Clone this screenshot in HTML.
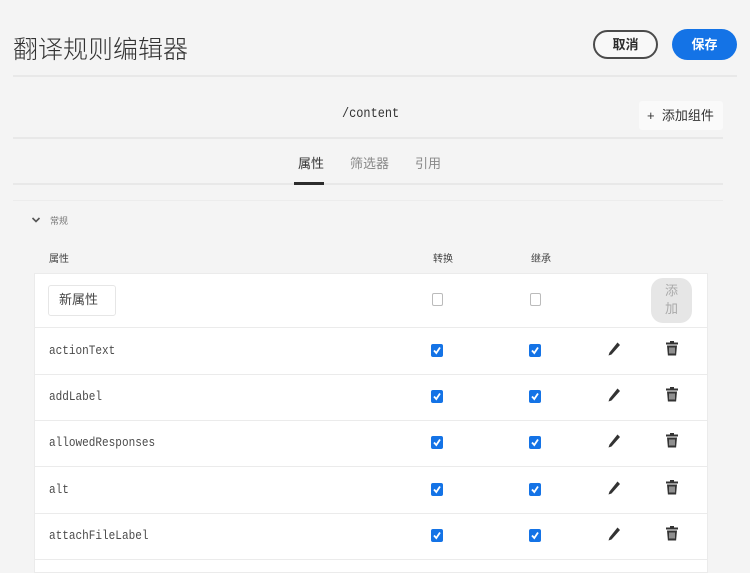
<!DOCTYPE html>
<html><head><meta charset="utf-8"><style>
*{margin:0;padding:0;box-sizing:border-box}
body{width:750px;height:571px;background:#f4f4f4;position:relative;overflow:hidden;font-family:"Liberation Sans","Noto Sans CJK SC",sans-serif;color:#2c2c2c}
.a{position:absolute}
.hr{position:absolute;height:2px;background:#e8e8e8}
.mono{font-family:"Liberation Mono","DejaVu Sans Mono",monospace;font-size:13px;color:#4b4b4b;transform:scaleX(0.85);transform-origin:left top;white-space:nowrap}
.cb{position:absolute;width:12px;height:13px;border-radius:2px;background:#1473e6}
.cb svg{position:absolute;left:1px;top:1px}
.ecb{position:absolute;width:11px;height:13px;border:1.5px solid #bbb;border-radius:2px;background:#fff}
.rowline{position:absolute;left:34px;width:674px;height:1px;background:#ebebeb}
</style></head><body>
<div class="a" style="left:13px;top:30px;font-size:25px;color:#333;font-weight:300">翻译规则编辑器</div>
<div class="a" style="left:593px;top:30px;width:65px;height:29px;border:2px solid #4b4b4b;border-radius:15px;font-size:13px;font-weight:bold;text-align:center;line-height:25px;background:#f8f8f8">取消</div>
<div class="a" style="left:672px;top:29px;width:65px;height:31px;border-radius:16px;background:#1473e6;color:#fff;font-size:13px;font-weight:bold;text-align:center;line-height:31px">保存</div>
<div class="hr" style="left:13px;top:75px;width:724px"></div>
<div class="a mono" style="left:342px;top:106px;font-size:14px;color:#333">/content</div>
<div class="a" style="left:639px;top:101px;width:84px;height:29px;background:#fafafa;border-radius:3px;font-size:13px;line-height:29px;padding-left:8px;color:#333">+&nbsp;&nbsp;添加组件</div>
<div class="hr" style="left:13px;top:137px;width:710px"></div>
<div class="a" style="left:298px;top:153px;font-size:13px;color:#333">属性</div>
<div class="a" style="left:350px;top:153px;font-size:13px;color:#888">筛选器</div>
<div class="a" style="left:415px;top:153px;font-size:13px;color:#888">引用</div>
<div class="hr" style="left:13px;top:183px;width:710px"></div>
<div class="a" style="left:294px;top:182px;width:30px;height:3px;background:#2c2c2c"></div>
<div class="hr" style="left:13px;top:200px;width:710px;height:1px;background:#ececec"></div>
<svg class="a" style="left:31px;top:216px" width="10" height="8"><path d="M1.5 2l3.5 3.5L8.5 2" stroke="#555" stroke-width="1.6" fill="none"/></svg>
<div class="a" style="left:50px;top:214px;font-size:9px;color:#777">常规</div>
<div class="a" style="left:49px;top:250px;font-size:10px;color:#444">属性</div>
<div class="a" style="left:433px;top:250px;font-size:10px;color:#444">转换</div>
<div class="a" style="left:531px;top:250px;font-size:10px;color:#444">继承</div>
<div class="a" style="left:34px;top:273px;width:674px;height:300px;background:#fff;border:1px solid #ebebeb"></div>
<div class="a" style="left:48px;top:285px;width:68px;height:31px;border:1.5px solid #e6e6e6;border-radius:3px;font-size:13px;line-height:28px;padding-left:10px;color:#444;background:#fff">新属性</div>
<div class="ecb" style="left:432px;top:293px"></div>
<div class="ecb" style="left:530px;top:293px"></div>
<div class="a" style="left:651px;top:278px;width:41px;height:45px;border-radius:12px;background:#e6e6e6;color:#aaa;font-size:13px;text-align:center;line-height:18px;padding-top:4px">添<br>加</div>
<div class="rowline" style="top:327px"></div>
<div class="rowline" style="top:374px"></div>
<div class="rowline" style="top:420px"></div>
<div class="rowline" style="top:466px"></div>
<div class="rowline" style="top:513px"></div>
<div class="rowline" style="top:559px"></div>
<div class="a mono" style="left:49px;top:343px">actionText</div>
<div class="a mono" style="left:49px;top:389px">addLabel</div>
<div class="a mono" style="left:49px;top:435px">allowedResponses</div>
<div class="a mono" style="left:49px;top:482px">alt</div>
<div class="a mono" style="left:49px;top:528px">attachFileLabel</div>
<div class="cb" style="left:431px;top:344px"><svg width="10" height="11"><path d="M2 5.5l2.3 2.5L8 2.5" stroke="#fff" stroke-width="1.8" fill="none"/></svg></div>
<div class="cb" style="left:529px;top:344px"><svg width="10" height="11"><path d="M2 5.5l2.3 2.5L8 2.5" stroke="#fff" stroke-width="1.8" fill="none"/></svg></div>
<div class="cb" style="left:431px;top:390px"><svg width="10" height="11"><path d="M2 5.5l2.3 2.5L8 2.5" stroke="#fff" stroke-width="1.8" fill="none"/></svg></div>
<div class="cb" style="left:529px;top:390px"><svg width="10" height="11"><path d="M2 5.5l2.3 2.5L8 2.5" stroke="#fff" stroke-width="1.8" fill="none"/></svg></div>
<div class="cb" style="left:431px;top:436px"><svg width="10" height="11"><path d="M2 5.5l2.3 2.5L8 2.5" stroke="#fff" stroke-width="1.8" fill="none"/></svg></div>
<div class="cb" style="left:529px;top:436px"><svg width="10" height="11"><path d="M2 5.5l2.3 2.5L8 2.5" stroke="#fff" stroke-width="1.8" fill="none"/></svg></div>
<div class="cb" style="left:431px;top:483px"><svg width="10" height="11"><path d="M2 5.5l2.3 2.5L8 2.5" stroke="#fff" stroke-width="1.8" fill="none"/></svg></div>
<div class="cb" style="left:529px;top:483px"><svg width="10" height="11"><path d="M2 5.5l2.3 2.5L8 2.5" stroke="#fff" stroke-width="1.8" fill="none"/></svg></div>
<div class="cb" style="left:431px;top:529px"><svg width="10" height="11"><path d="M2 5.5l2.3 2.5L8 2.5" stroke="#fff" stroke-width="1.8" fill="none"/></svg></div>
<div class="cb" style="left:529px;top:529px"><svg width="10" height="11"><path d="M2 5.5l2.3 2.5L8 2.5" stroke="#fff" stroke-width="1.8" fill="none"/></svg></div>
<svg class="a" style="left:607px;top:341px" width="14" height="16"><path d="M10.5 1.5l2.5 2.5L4.5 13.5 1.5 14.5l1-3z" fill="#333"/></svg>
<svg class="a" style="left:607px;top:387px" width="14" height="16"><path d="M10.5 1.5l2.5 2.5L4.5 13.5 1.5 14.5l1-3z" fill="#333"/></svg>
<svg class="a" style="left:607px;top:433px" width="14" height="16"><path d="M10.5 1.5l2.5 2.5L4.5 13.5 1.5 14.5l1-3z" fill="#333"/></svg>
<svg class="a" style="left:607px;top:480px" width="14" height="16"><path d="M10.5 1.5l2.5 2.5L4.5 13.5 1.5 14.5l1-3z" fill="#333"/></svg>
<svg class="a" style="left:607px;top:526px" width="14" height="16"><path d="M10.5 1.5l2.5 2.5L4.5 13.5 1.5 14.5l1-3z" fill="#333"/></svg>
<svg class="a" style="left:665px;top:340px" width="14" height="17"><path d="M5 1h4v1.5h4v2H1v-2h4z" fill="#333"/><path d="M2 5.5h10l-.9 10H2.9z" fill="#333"/><path d="M5 7.5v6M7 7.5v6M9 7.5v6" stroke="#fff" stroke-width=".9"/></svg>
<svg class="a" style="left:665px;top:386px" width="14" height="17"><path d="M5 1h4v1.5h4v2H1v-2h4z" fill="#333"/><path d="M2 5.5h10l-.9 10H2.9z" fill="#333"/><path d="M5 7.5v6M7 7.5v6M9 7.5v6" stroke="#fff" stroke-width=".9"/></svg>
<svg class="a" style="left:665px;top:432px" width="14" height="17"><path d="M5 1h4v1.5h4v2H1v-2h4z" fill="#333"/><path d="M2 5.5h10l-.9 10H2.9z" fill="#333"/><path d="M5 7.5v6M7 7.5v6M9 7.5v6" stroke="#fff" stroke-width=".9"/></svg>
<svg class="a" style="left:665px;top:479px" width="14" height="17"><path d="M5 1h4v1.5h4v2H1v-2h4z" fill="#333"/><path d="M2 5.5h10l-.9 10H2.9z" fill="#333"/><path d="M5 7.5v6M7 7.5v6M9 7.5v6" stroke="#fff" stroke-width=".9"/></svg>
<svg class="a" style="left:665px;top:525px" width="14" height="17"><path d="M5 1h4v1.5h4v2H1v-2h4z" fill="#333"/><path d="M2 5.5h10l-.9 10H2.9z" fill="#333"/><path d="M5 7.5v6M7 7.5v6M9 7.5v6" stroke="#fff" stroke-width=".9"/></svg>
</body></html>
